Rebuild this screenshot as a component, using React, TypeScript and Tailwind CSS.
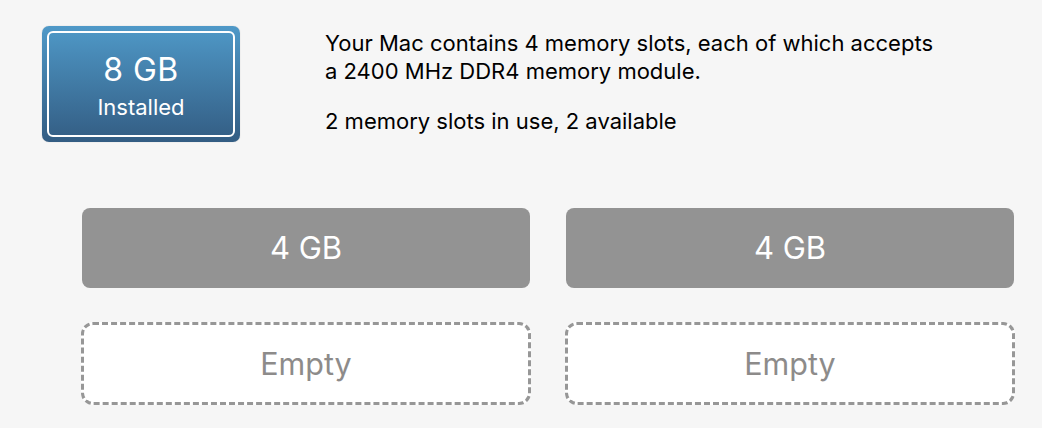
const App = () => {
  const used = ["4 GB", "4 GB"];
  return (
    <div
      className="w-[1042px] h-[428px] bg-[#f6f6f6] overflow-hidden"
      style={{ fontFamily: 'Inter, "Liberation Sans", Arial, sans-serif' }}
    >
      <div className="flex pt-[26px] pl-[42px]">
        <div className="w-[198px] h-[116px] rounded-[7px] p-[5px] bg-gradient-to-b from-[#4f99c8] to-[#335d83] shadow-[0_0_1px_rgba(0,0,0,0.3)]">
          <div className="h-full rounded-[6px] border-2 border-white flex flex-col items-center text-white">
            <div className="text-[32px] tracking-[0.5px] leading-none mt-[21px]">8 GB</div>
            <div className="text-[22px] leading-none mt-[10px]">Installed</div>
          </div>
        </div>
        <div className="ml-[85px] pt-[3px] text-[22px] leading-[28px] text-black">
          <p>Your Mac contains 4 memory slots, each of which accepts</p>
          <p>a 2400 MHz DDR4 memory module.</p>
          <p className="mt-[22px]">2 memory slots in use, 2 available</p>
        </div>
      </div>
      <div className="grid grid-cols-2 gap-x-[36px] gap-y-[34px] pl-[82px] pr-[28px] mt-[66px]">
        {used.map((s, i) => (
          <div
            key={i}
            className="h-[80px] rounded-[8px] bg-[#939393] flex items-center justify-center text-white text-[31px]"
          >
            {s}
          </div>
        ))}
        {[0, 1].map((i) => (
          <div
            key={i}
            className="h-[83px] -mx-[1px] rounded-[12px] border-[3px] border-dashed border-[#979797] bg-white flex items-center justify-center text-[#8d8b8a] text-[30.5px]"
          >
            Empty
          </div>
        ))}
      </div>
    </div>
  );
};

export default App;
